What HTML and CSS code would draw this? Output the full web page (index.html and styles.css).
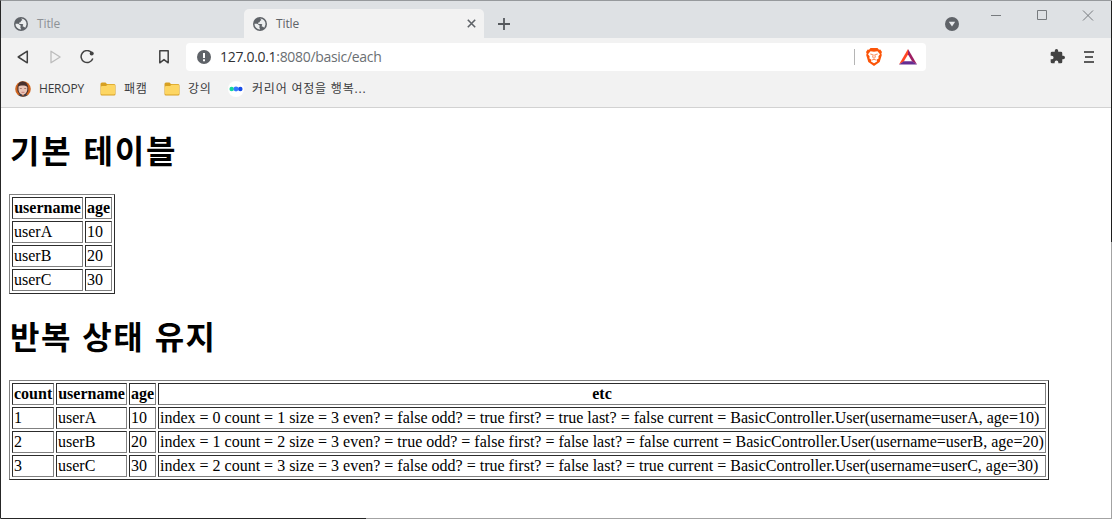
FILE: index.html
```html
<!DOCTYPE html>
<html lang="ko">
<head>
<meta charset="utf-8">
<title>Title</title>
<link rel="stylesheet" href="styles.css">
</head>
<body>
<svg width="0" height="0" class="defs">
  <symbol id="globe" viewBox="0 0 14 14"><circle cx="7" cy="7" r="7" fill="#5f6368"/><path d="M1.500 6.700 4.200 6.800 6.800 8.700 6.300 10.300 7.200 12.500A5.500 5.500 0 0 1 1.500 6.700ZM7 1.500A5.500 5.500 0 0 1 12.500 7.500L11.300 10.800 9.800 9.800 8.500 9.300 9.300 7.800 8.500 7H5.200L5.300 5.600 6.600 5.200 7 3.900 8.500 3Z" fill="#eceeef"/></symbol>
  <symbol id="folder" viewBox="0 0 16 14"><path d="M.5 2Q.5.5 2 .5H5.500L7 2H14Q15.500 2 15.500 3.500V12Q15.500 13.500 14 13.500H2Q.5 13.500.5 12Z" fill="#d7a022"/><path d="M1 5Q1 4 2 4H6L7.500 2.700H14Q15 2.700 15 3.700V11.500Q15 12.500 14 12.500H2Q1 12.500 1 11.500Z" fill="#fdd663"/></symbol>
</svg>
<div class="window">
  <header class="tabstrip">
    <div class="tab"><svg class="i14"><use href="#globe"/></svg><span>Title</span></div>
    <div class="tab active"><svg class="i14"><use href="#globe"/></svg><span>Title</span>
      <svg class="close" width="9" height="9" viewBox="0 0 9 9"><path d="M.8.8 8.2 8.2M8.2.8.8 8.2" stroke="#5f6368" stroke-width="1.600"/></svg></div>
    <svg class="plus" width="12" height="12"><path d="M6 0V12M0 6H12" stroke="#55595d" stroke-width="1.800"/></svg>
    <svg class="drop" width="14" height="14"><circle cx="7" cy="7" r="7" fill="#5f6368"/><path d="M3.800 4.800H10.200L7 9.500Z" fill="#e8eaed"/></svg>
    <svg class="controls" width="104" height="12" fill="none" stroke="#777b7e"><path d="M0 5.500H10M46.500 .5H55.500V9.500H46.500ZM92 .5 102 10.500M102 .5 92 10.500"/></svg>
  </header>
  <div class="toolbar">
    <svg class="back" width="12" height="14"><path d="M10.300 1.200V12.800L1.200 7Z" fill="none" stroke="#424242" stroke-width="1.500" stroke-linejoin="round"/></svg>
    <svg class="forward" width="12" height="14"><path d="M1 1.200V12.800L10.100 7Z" fill="none" stroke="#bcbcbc" stroke-width="1.300" stroke-linejoin="round"/></svg>
    <svg class="reload" width="15" height="14"><path d="M11.500 2.500A6 6 0 1 0 12.800 8.500" fill="none" stroke="#424242" stroke-width="1.500"/><circle cx="11.700" cy="3.500" r="2" fill="#424242"/></svg>
    <svg class="mark" width="10" height="14"><path d="M.8.800H9.200V12.800L5 9.600.800 12.800Z" fill="none" stroke="#424242" stroke-width="1.500" stroke-linejoin="round"/></svg>
    <div class="address">
      <svg class="info" width="14" height="14"><circle cx="7" cy="7" r="7" fill="#5f6368"/><path d="M7 3V8M7 9.300V11.200" stroke="#fff" stroke-width="2"/></svg>
      <span class="url"><b>127.0.0.1</b>:8080/basic/each</span>
      <i class="sep"></i>
      <svg class="lion" width="16" height="18"><path d="M4.500 0H11.500L13 1.700 14.300 1.600 16 3.900 15.300 5.500 15.800 7 13.700 14 8 18 2.300 14 .2 7 .7 5.500 0 3.900 1.700 1.600 3 1.700Z" fill="#fb5408"/><path d="M4.500 3.200 8 3.700 11.500 3.200 14 6.200 12.400 8.300 12.600 10.500 10.500 11.700 11 13.500 8 15.300 5 13.500 5.500 11.700 3.400 10.500 3.600 8.300 2 6.200Z" fill="#fff"/><path d="M4.300 6 6.700 6.600M11.700 6 9.300 6.600M7.200 6.500 6.700 9.300 8 10.300 9.300 9.300 8.800 6.500M6 12 8 11.300 10 12" fill="none" stroke="#fb5408" stroke-width=".7"/></svg>
      <svg class="bat" width="18" height="16"><path d="M9 0V5.500L4.800 12.400 0 15.500Z" fill="#ff4724"/><path d="M9 0 18 15.500 13.200 12.400 9 5.500Z" fill="#9e1f63"/><path d="M0 15.500 4.800 12.200H13.200L18 15.500Z" fill="#662d91"/></svg>
    </div>
    <svg class="puzzle" width="15" height="15" viewBox="1 1 22 22"><path d="M20.500 11H19V7a2 2 0 0 0-2-2h-4V3.500a2.500 2.500 0 0 0-5 0V5H4a2 2 0 0 0-2 2v3.800h1.500a2.700 2.700 0 0 1 0 5.400H2V20a2 2 0 0 0 2 2h3.800v-1.500a2.700 2.700 0 0 1 5.400 0V22H17a2 2 0 0 0 2-2v-4h1.500a2.500 2.500 0 0 0 0-5Z" fill="#424242"/></svg>
    <svg class="menu" width="10" height="12"><path d="M0 1H10M1 6H9M0 11H10" stroke="#5c5c5c" stroke-width="1.800"/></svg>
  </div>
  <nav class="bookmarks">
    <svg class="face" width="16" height="16"><circle cx="8" cy="8" r="7.800" fill="#cf641f"/><path d="M2.500 10Q1.500 1 7.500 .300Q14 1 13.300 10L11 14H5Z" fill="#49302d"/><path d="M3.500 5.500Q5 4 8 4.500Q11 4 12.300 6V9Q11.500 13 8 14Q4 13 3.500 9Z" fill="#eac5b8"/><path d="M4.800 7.500H6.800M9.200 7.500H11.200" stroke="#94695f" stroke-width=".8"/><path d="M6.500 11.300H9.500" stroke="#bd6c66" stroke-width=".8"/><path d="M3 14 6 13.500 8 15 10 13.500 13 14Q8 17.500 3 14Z" fill="#39404f"/></svg>
    <span class="bm heropy">HEROPY</span>
    <svg class="fold" width="16" height="14"><use href="#folder"/></svg><span class="bm f1">패캠</span>
    <svg class="fold" width="16" height="14"><use href="#folder"/></svg><span class="bm f2">강의</span>
    <svg class="dots" width="16" height="16"><circle cx="8" cy="8" r="8" fill="#fff"/><circle cx="3.700" cy="8" r="2.300" fill="#16d69b"/><circle cx="12.300" cy="8" r="2.300" fill="#174ce8"/><circle cx="8" cy="8" r="2.400" fill="#3478ff"/></svg><span class="bm f3">커리어 여정을 행복...</span>
  </nav>
  <main class="page">
    <h1>기본 테이블</h1>
    <table class="grid users">
      <colgroup><col class="c-name"><col class="c-age"></colgroup>
      <tr><th>username</th><th>age</th></tr>
      <tr><td>userA</td><td>10</td></tr>
      <tr><td>userB</td><td>20</td></tr>
      <tr><td>userC</td><td>30</td></tr>
    </table>
    <h1 class="second">반복 상태 유지</h1>
    <table class="grid states">
      <colgroup><col class="c-count"><col class="c-name"><col class="c-age"><col></colgroup>
      <tr><th>count</th><th>username</th><th>age</th><th>etc</th></tr>
      <tr><td>1</td><td>userA</td><td>10</td><td>index = 0 count = 1 size = 3 even? = false odd? = true first? = true last? = false current = BasicController.User(username=userA, age=10)</td></tr>
      <tr><td>2</td><td>userB</td><td>20</td><td>index = 1 count = 2 size = 3 even? = true odd? = false first? = false last? = false current = BasicController.User(username=userB, age=20)</td></tr>
      <tr><td>3</td><td>userC</td><td>30</td><td>index = 2 count = 3 size = 3 even? = false odd? = true first? = false last? = true current = BasicController.User(username=userC, age=30)</td></tr>
    </table>
  </main>
  <i class="edge-right"></i><i class="edge-bottom"></i>
</div>
</body>
</html>
```
FILE: styles.css
```css
* { box-sizing: border-box; }
body { margin: 0; background: #fff; }
svg { display: block; flex: none; }
.defs { position: absolute; }
.window { position: relative; width: 1112px; height: 519px; border: 1px solid #a3a3a3; border-left-color: #262626; border-top-color: #96999c; }
.edge-right { position: absolute; right: -1px; top: 0; width: 1px; height: 241px; background: #1e1e1e; }
.edge-bottom { position: absolute; left: 0; bottom: -1px; width: 365px; height: 1px; background: #262626; }

.tabstrip { display: flex; height: 37px; background: #dee1e4; font: 12px/16px "Open Sans", sans-serif; color: #8d9196; }
.i14 { width: 14px; height: 14px; }
.tab { display: flex; align-items: center; width: 243px; height: 29px; margin-top: 8px; padding-left: 13px; }
.tab span { margin-left: 9px; letter-spacing: -.1px; }
.active { width: 240px; padding-left: 9px; background: #f2f2f2; border-radius: 5px 5px 0 0; color: #5f6368; }
.close { margin-left: auto; margin-right: 8px; }
.plus { margin: 17px 0 0 14px; }
.drop { margin: 16px 0 0 435px; }
.controls { margin: 9px 0 0 32px; }

.toolbar { display: flex; align-items: center; height: 37px; background: #f2f2f2; }
.back { margin-left: 16px; }
.forward { margin-left: 21px; }
.reload { margin-left: 18px; }
.mark { margin-left: 64px; }
.address { display: flex; align-items: center; width: 740px; height: 28px; margin-left: 17px; background: #fff; border-radius: 4px; padding-left: 11px; }
.url { width: 162px; margin-left: 9px; font: 14px/18px "Open Sans", sans-serif; letter-spacing: -.31px; color: #6b6f73; white-space: nowrap; }
.url b { font-weight: 400; color: #303134; }
.sep { width: 1px; height: 16px; margin-left: 472px; background: #b5b5b5; }
.lion { margin-left: 11px; }
.bat { margin-left: 17px; }
.puzzle { margin-left: 124px; }
.menu { margin-left: 19px; }

.bookmarks { display: flex; align-items: center; height: 33px; padding: 0 0 5px 14px; background: #f2f2f2; border-bottom: 1px solid #d2d2d2; }
.bm { font: 12px/16px "Open Sans", "Noto Sans CJK KR", sans-serif; color: #3a3b3d; white-space: nowrap; }
.heropy { width: 69px; padding-left: 8px; letter-spacing: -.2px; }
.f1, .f2 { width: 48px; padding-left: 8px; letter-spacing: .7px; }
.f3 { padding-left: 8px; letter-spacing: .8px; }

.page { height: 410px; padding: 19px 8px 0; font: 16px/18px "Liberation Serif", "Noto Sans CJK KR", serif; color: #000; }
h1 { height: 45px; margin: 0 0 22px; padding-left: 1px; font: bold 32px/45px "Noto Sans CJK KR", sans-serif; letter-spacing: 1.850px; }
.second { letter-spacing: 1.500px; }
.grid { table-layout: fixed; border: 1px solid; border-color: #808080 #2c2c2c #2c2c2c #808080; border-spacing: 2px; }
.grid th, .grid td { height: 22px; padding: 1px; border: 1px solid; border-color: #2c2c2c #808080 #808080 #2c2c2c; white-space: nowrap; }
.users { width: 106px; margin-bottom: 19px; }
.states { width: 1040px; }
.c-count { width: 42px; }
.c-name { width: 71px; }
.c-age { width: 27px; }
```
